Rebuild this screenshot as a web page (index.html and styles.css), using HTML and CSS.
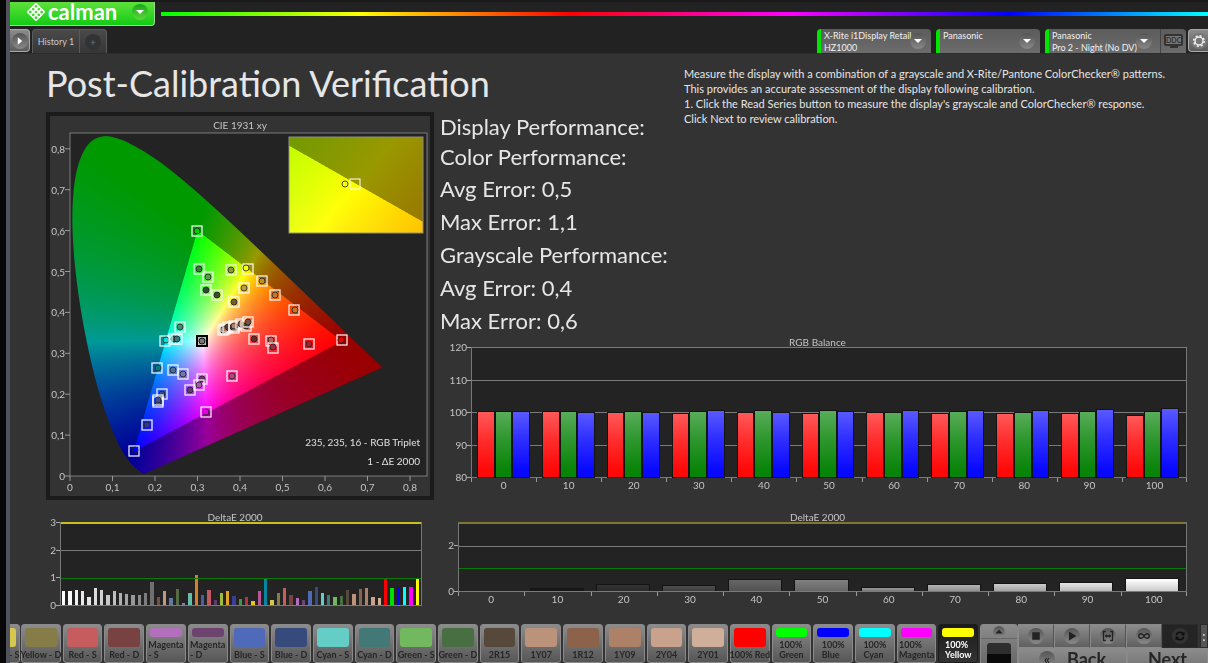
FILE: index.html
```
<!DOCTYPE html>
<html lang="en">
    <head>
        <meta charset="utf-8">
        <title>Calman</title>
        <link rel="stylesheet" href="styles.css">
    </head>
    <body>
        <div class="desktop-edge"></div>

        <div class="app">
            <header class="topbar">
                <button class="brand">
                    <svg class="brand-mark" viewBox="0 0 20 20">
                        <g transform="rotate(45 10 10)" fill="none" stroke="#fff" stroke-width="1.6">
                            <rect x="4" y="4" width="12" height="12" rx="1"/>
                            <path d="M8 4v12M12 4v12M4 8h12M4 12h12"/>
                        </g>
                    </svg>
                    <span class="brand-name">calman</span>
                    <span class="round green"><span class="caret"></span></span>
                </button>
                <div class="rainbow"></div>
            </header>

            <nav class="tabs">
                <button class="icon-tab light" aria-label="Expand">
                    <span class="round"><svg viewBox="0 0 16 16"><path d="M5 3l6 5-6 5z" fill="#fff"/></svg></span>
                </button>
                <div class="history">
                    <button class="history-tab">History 1</button>
                    <button class="add-tab" aria-label="Add"><span class="round dark">+</span></button>
                </div>
                <div class="devices">
                    <button class="device meter">
                        <span class="device-name">X-Rite i1Display Retail<br>HZ1000</span>
                        <span class="round"><span class="caret"></span></span>
                    </button>
                    <button class="device source">
                        <span class="device-name">Panasonic</span>
                        <span class="round"><span class="caret"></span></span>
                    </button>
                    <div class="device display">
                        <button class="device-pick">
                            <span class="device-name">Panasonic<br>Pro 2 - Night (No DV)</span>
                            <span class="round"><span class="caret"></span></span>
                        </button>
                        <button class="ddc"><span class="ddc-screen">DDC</span><span class="ddc-stand"></span></button>
                    </div>
                    <button class="icon-tab light gear" aria-label="Settings">
                        <svg viewBox="0 0 20 20">
                            <circle cx="10" cy="10" r="9" fill="#777"/>
                            <circle cx="10" cy="10" r="4.4" fill="none" stroke="#eee" stroke-width="1.6"/>
                            <circle cx="10" cy="10" r="5.8" fill="none" stroke="#eee" stroke-width="1.8" stroke-dasharray="2.3 2.25"/>
                        </svg>
                    </button>
                </div>
            </nav>

            <main class="content">
                <h1>Post-Calibration Verification</h1>

                <div class="instructions">
                    <p>Measure the display with a combination of a grayscale and X-Rite/Pantone ColorChecker® patterns.</p>
                    <p>This provides an accurate assessment of the display following calibration.</p>
                    <p>1. Click the Read Series button to measure the display's grayscale and ColorChecker® response.</p>
                    <p>Click Next to review calibration.</p>
                </div>

                <section class="cie">
                    <canvas id="gamut" width="760" height="760"></canvas>
                    <svg id="cie-overlay" viewBox="0 0 380 380">
                        <text x="190" y="13" text-anchor="middle">CIE 1931 xy</text>
                        <rect x="20" y="17" width="357" height="343" fill="none" stroke="#7c7c7c"/>
                        <rect x="239" y="21" width="134" height="96" fill="none" stroke="#8f8f80"/>
                        <circle cx="295" cy="68" r="3" fill="none" stroke="#4d4d00"/>
                        <rect x="300" y="63" width="10" height="10" fill="none" stroke="#fff"/>
                        <text class="readout" x="370" y="330" text-anchor="end">235, 235, 16 - RGB Triplet</text>
                        <text class="readout" x="370" y="349" text-anchor="end">1 - ΔE 2000</text>
                    </svg>
                </section>

                <section class="performance">
                    <h2>Display Performance:</h2>
                    <h2>Color Performance:</h2>
                    <p>Avg Error: 0,5</p>
                    <p>Max Error: 1,1</p>
                    <p>Grayscale Performance:</p>
                    <p>Avg Error: 0,4</p>
                    <p>Max Error: 0,6</p>
                </section>

                <figure class="chart rgb-balance" id="rgb-balance">
                    <figcaption>RGB Balance</figcaption>
                    <div class="y-axis"><span>120</span><span>110</span><span>100</span><span>90</span><span>80</span></div>
                    <div class="plot">
                        <div class="lines"><i></i><i></i><i></i><i></i><i></i></div>
                        <div class="bars"></div>
                    </div>
                    <div class="x-axis"></div>
                </figure>

                <figure class="chart delta-colors" id="delta-colors">
                    <figcaption>DeltaE 2000</figcaption>
                    <div class="y-axis"><span>3</span><span>2</span><span>1</span><span>0</span></div>
                    <div class="plot">
                        <div class="bars"></div>
                        <div class="lines"><i class="limit"></i><i></i><i class="good"></i><i></i></div>
                    </div>
                </figure>

                <figure class="chart delta-gray" id="delta-gray">
                    <figcaption>DeltaE 2000</figcaption>
                    <div class="y-axis"><span class="blank"></span><span>2</span><span class="blank"></span><span>0</span></div>
                    <div class="plot">
                        <div class="bars"></div>
                        <div class="lines"><i class="limit"></i><i></i><i class="good"></i><i></i></div>
                    </div>
                    <div class="x-axis"></div>
                </figure>
            </main>

            <footer class="bottombar">
                <div class="cut">
                    <button class="patch"><span class="chip yellow-s"></span><span>Yellow - S</span></button>
                </div>
                <div class="patches" id="patches"></div>
                <div class="level">
                    <button aria-label="Up"><span class="round"><svg viewBox="0 0 16 16"><path d="M3 10l5-5 5 5z" fill="#222"/></svg></span></button>
                    <div class="level-slot"></div>
                </div>
                <div class="transport">
                    <div class="transport-row">
                        <button aria-label="Stop"><span class="round"><svg viewBox="0 0 16 16"><path d="M3 3h10v10H3z" fill="#222"/></svg></span></button>
                        <button aria-label="Play"><span class="round"><svg viewBox="0 0 16 16"><path d="M4 2l10 6-10 6z" fill="#222"/></svg></span></button>
                        <button aria-label="Read series"><span class="round"><svg viewBox="0 0 16 16"><path d="M5 2H2v12h3M11 2h3v12h-3M4 8h8M6 6v4M10 6v4" fill="none" stroke="#222" stroke-width="1.8"/></svg></span></button>
                        <button aria-label="Continuous"><span class="round"><svg viewBox="0 0 16 16"><path d="M8 8C6 4 1 4 1 8s5 4 7 0 7-4 7 0-5 4-7 0z" fill="none" stroke="#222" stroke-width="1.8"/></svg></span></button>
                        <button class="pressed" aria-label="Refresh"><span class="round dark"><svg viewBox="0 0 16 16"><path d="M3 7a5 5 0 0 1 9-2M13 9a5 5 0 0 1-9 2" fill="none" stroke="#0c0c0c" stroke-width="2"/><path d="M14 2v5H9zM2 14V9h5z" fill="#0c0c0c"/></svg></span></button>
                        <button class="pressed more">:</button>
                    </div>
                    <div class="nav-row">
                        <button class="back"><span class="round">«</span>Back</button>
                        <button class="next">Next</button>
                    </div>
                </div>
            </footer>
        </div>

        <script>

            const levels = [0, 10, 20, 30, 40, 50, 60, 70, 80, 90, 100];

            const balance = [
                [100, 100, 100],
                [100, 100, 99.7],
                [99.7, 100, 99.7],
                [99.4, 100, 100.3],
                [99.7, 100.3, 99.7],
                [99.4, 100.3, 100],
                [99.7, 99.7, 100.3],
                [99.4, 100, 100.3],
                [99.4, 99.7, 100.3],
                [99.4, 100, 100.6],
                [98.8, 100, 100.9]
            ];

            const grayDelta = [0, 0.07, 0.27, 0.22, 0.5, 0.46, 0.12, 0.25, 0.3, 0.33, 0.52];

            const colorDelta = [
                [0.5, '#fff'], [0.5, '#fafafa'], [0.55, '#f2f2f2'], [0.5, '#eaeaea'], [0.3, '#e4e4e4'],
                [0.62, '#dcdcdc'], [0.55, '#d2d2d2'], [0.35, '#c8c8c8'], [0.52, '#bebebe'], [0.45, '#b0b0b0'],
                [0.4, '#a4a4a4'], [0.36, '#989898'], [0.36, '#8a8a8a'], [0.45, '#7c7c7c'], [0.82, '#707070'],
                [0.3, '#735244'], [0.5, '#c29682'], [0.25, '#627a9d'], [0.58, '#576c43'], [0.08, '#8580b1'],
                [0.43, '#67bdaa'], [1.08, '#d67e2c'], [0.35, '#505ba6'], [0.55, '#c15a63'], [0.18, '#5e3c6c'],
                [0.43, '#9dbc40'], [0.52, '#e0a32e'], [0.32, '#383d96'], [0.23, '#469449'], [0.28, '#af363c'],
                [0.14, '#e7c71f'], [0.5, '#bb5695'], [0.93, '#0885a1'], [0.17, '#d6c84f'], [0.43, '#867c48'],
                [0.6, '#c75c5f'], [0.38, '#774241'], [0.25, '#b26fbc'], [0.17, '#6c446f'], [0.52, '#4f6ab8'],
                [0.65, '#374a7c'], [0.42, '#64cdc6'], [0.37, '#427876'], [0.3, '#72b85e'], [0.31, '#476f42'],
                [0.55, '#57483c'], [0.4, '#bb937b'], [0.58, '#8c624a'], [0.62, '#ad8167'], [0.3, '#c8a28c'],
                [0.25, '#cfae9a'], [0.93, '#f00'], [0.62, '#0d0'], [0.65, '#00f'], [0.65, '#0ff'],
                [0.65, '#f0f'], [0.93, '#ff0']
            ];

            const patches = [
                ['Yellow - D', '#867c48'], ['Red - S', '#c75c5f'], ['Red - D', '#774241'],
                ['Magenta<br>- S', '#b26fbc', 'left'], ['Magenta<br>- D', '#6c446f', 'left'],
                ['Blue - S', '#4f6ab8'], ['Blue - D', '#374a7c'], ['Cyan - S', '#64cdc6'], ['Cyan - D', '#427876'],
                ['Green - S', '#72b85e'], ['Green - D', '#476f42'], ['2R15', '#57483c'], ['1Y07', '#bb937b'],
                ['1R12', '#8c624a'], ['1Y09', '#ad8167'], ['2Y04', '#c8a28c'], ['2Y01', '#cfae9a'],
                ['100% Red', '#ff0000'], ['100%<br>Green', '#00ff00', 'left'], ['100%<br>Blue', '#0000ff', 'left'],
                ['100%<br>Cyan', '#00ffff', 'left'], ['100%<br>Magenta', '#ff00ff', 'left'],
                ['100%<br>Yellow', '#ffff00', 'left selected']
            ];

            // target x, y, measured colour, measured offset
            const markers = [
                [147, 115, '#00d000'], [149, 153, '#3a7a45'], [158, 161, '#5f9950'], [156, 174, '#2d4a35'],
                [167, 179, '#3c4c28'], [181, 154, '#8a9a30'], [198, 153, '#ffff00', -2, -1], [212, 165, '#b89030'],
                [194, 172, '#b8a040'], [184, 186, '#6a5f35'], [225, 179, '#c07830'], [130, 211, '#4a8a70'],
                [115, 225, '#00e0e0', 1, -1], [124, 223, '#207070'], [127, 223, '#387878'],
                [173, 214, '#c29682'], [175, 213, '#a87c68'], [178, 211, '#573c30'], [184, 212, '#8c624a'],
                [184, 210, '#ad8167'], [191, 208, '#8c624a'], [196, 210, '#573c30'], [198, 206, '#735244'],
                [204, 223, '#6a2a2a'], [221, 225, '#c15a63', 0, -1], [223, 232, '#a03040', 0, -1],
                [107, 252, '#087a85', 1, 0], [123, 254, '#50709a'], [133, 258, '#7078a8'], [112, 278, '#374a7c'],
                [108, 286, '#4f6ab8'], [108, 284, '#404f90'], [140, 274, '#5e3c6c'], [152, 263, '#6c3468'],
                [149, 269, '#a060a8'], [97, 309, '#303890'], [84, 335, '#0000ff', 1, -1], [156, 296, '#e000e0'],
                [182, 260, '#b04888'], [244, 194, '#c87820', 1, 0], [259, 228, '#a82030'], [292, 224, '#f00000', -1, 0]
            ];

            const locus = [
                [0.1741, 0.005], [0.1714, 0.0051], [0.1644, 0.0109], [0.1566, 0.0177], [0.144, 0.0297],
                [0.1241, 0.0578], [0.1096, 0.0868], [0.0913, 0.1327], [0.0687, 0.2007], [0.0454, 0.295],
                [0.0235, 0.4127], [0.0082, 0.5384], [0.0039, 0.6548], [0.0139, 0.7502], [0.0389, 0.812],
                [0.0743, 0.8338], [0.1142, 0.8262], [0.1547, 0.8059], [0.1929, 0.7816], [0.2296, 0.7543],
                [0.3016, 0.6923], [0.3731, 0.6245], [0.4441, 0.5547], [0.5125, 0.4866], [0.5752, 0.4242],
                [0.627, 0.3725], [0.6658, 0.334], [0.6915, 0.3083], [0.719, 0.2809], [0.7347, 0.2653]
            ];

            // plot origin and size of 0.1 in the 380 x 380 drawing
            const originX = 20;
            const originY = 360;
            const stepX = 42.5;
            const stepY = 40.9;

            function colorAt(x, y) {
                const X = x / y;
                const Z = (1 - x - y) / y;
                const rgb = [
                    3.2406 * X - 1.5372 - 0.4986 * Z,
                    -0.9689 * X + 1.8758 + 0.0415 * Z,
                    0.0557 * X - 0.204 + 1.057 * Z
                ];
                const inside = Math.min(...rgb) >= 0;
                const scale = (inside ? 255 : 153) / Math.max(...rgb);
                return rgb.map(c => Math.max(0, c * scale));
            }

            function shade(width, height, x0, x1, y0, y1) {
                const buffer = document.createElement('canvas');
                buffer.width = width;
                buffer.height = height;
                const context = buffer.getContext('2d');
                const image = context.createImageData(width, height);
                for (let row = 0; row < height; row++) {
                    for (let col = 0; col < width; col++) {
                        const x = x0 + (x1 - x0) * (col + 0.5) / width;
                        const y = y1 - (y1 - y0) * (row + 0.5) / height;
                        const i = (row * width + col) * 4;
                        const rgb = colorAt(x, y);
                        image.data[i] = rgb[0];
                        image.data[i + 1] = rgb[1];
                        image.data[i + 2] = rgb[2];
                        image.data[i + 3] = 255;
                    }
                }
                context.putImageData(image, 0, 0);
                return buffer;
            }

            function drawGamut() {
                const context = document.querySelector('#gamut').getContext('2d');
                context.scale(2, 2);
                context.fillStyle = '#232323';
                context.fillRect(20, 17, 357, 343);

                const points = locus.map(p => [originX + p[0] * 10 * stepX, originY - p[1] * 10 * stepY]);
                context.save();
                context.beginPath();
                context.moveTo(points[0][0], points[0][1]);
                for (let i = 1; i < points.length - 1; i++) {
                    const next = points[i + 1];
                    context.quadraticCurveTo(points[i][0], points[i][1], (points[i][0] + next[0]) / 2, (points[i][1] + next[1]) / 2);
                }
                const last = points[points.length - 1];
                context.lineTo(last[0], last[1]);
                context.closePath();
                context.clip();
                context.drawImage(shade(714, 686, 0, 35.7 / stepX, 0, 34.3 / stepY), 20, 17, 357, 343);
                context.restore();

                context.drawImage(shade(268, 192, 0.399, 0.439, 0.485, 0.525), 239, 21, 134, 96);
            }

            function drawOverlay() {
                let svg = '';
                for (let i = 0; i <= 8; i++) {
                    const x = originX + i * stepX;
                    const y = originY - i * stepY;
                    const label = i === 0 ? '0' : '0,' + i;
                    svg += `<path d="M${x} 360v5M20 ${y}h-5" stroke="#999"/>`;
                    svg += `<text x="${x}" y="375" text-anchor="middle">${label}</text>`;
                    svg += `<text x="15" y="${y + 4}" text-anchor="end">${label}</text>`;
                }
                for (const [x, y, color, dx = 0, dy = 0] of markers) {
                    svg += `<rect x="${x - 5}" y="${y - 5}" width="10" height="10" fill="none" stroke="#fff" stroke-opacity="0.9" stroke-width="1.3"/>`;
                    svg += `<circle cx="${x + dx}" cy="${y + dy}" r="3" fill="${color}" stroke="#222" stroke-opacity="0.8"/>`;
                }
                svg += '<rect x="147" y="220" width="10" height="10" fill="#bbb" stroke="#000" stroke-width="2"/>';
                svg += '<circle cx="152" cy="225" r="3" fill="#777" stroke="#111"/>';
                document.querySelector('#cie-overlay').innerHTML += svg;
            }

            function drawCharts() {
                const bar = (height, color) => `<b class="bar" style="height: ${height}%; background-color: ${color}"></b>`;

                document.querySelector('#rgb-balance .bars').innerHTML = balance.map(values =>
                    '<div class="group">' + values.map((v, i) =>
                        bar((v - 80) / 40 * 100, ['#ff0808', '#088408', '#0808ff'][i])).join('') + '</div>').join('');

                document.querySelector('#delta-colors .bars').innerHTML = colorDelta.map(([v, color]) =>
                    '<div class="group">' + bar(v / 3 * 100, color) + '</div>').join('');

                document.querySelector('#delta-gray .bars').innerHTML = grayDelta.map((v, i) => {
                    const gray = Math.round(i * 25.5);
                    return '<div class="group">' + (v ? bar(v / 3 * 100, `rgb(${gray}, ${gray}, ${gray})`) : '') + '</div>';
                }).join('');

                document.querySelectorAll('.x-axis').forEach(axis => {
                    axis.innerHTML = levels.map(level => `<span>${level}</span>`).join('');
                });
            }

            function drawPatches() {
                document.querySelector('#patches').innerHTML = patches.map(([name, color, type = '']) =>
                    `<button class="patch ${type}"><span class="chip" style="background-color: ${color}"></span><span>${name}</span></button>`).join('');
            }

            drawGamut();
            drawOverlay();
            drawCharts();
            drawPatches();

        </script>
    </body>
</html>
```
FILE: styles.css
```
* {
    box-sizing: border-box;
}
body {
    margin: 0;
    display: flex;
    height: 100vh;
    overflow: hidden;
    background-color: #333333;
    color: #e6e6e6;
    font-family: Lato, "Open Sans", sans-serif;
}
button {
    margin: 0;
    padding: 0;
    border: none;
    background: none;
    color: inherit;
    font-family: inherit;
    cursor: pointer;
}
p, h1, h2, figure {
    margin: 0;
    font-weight: normal;
}
.desktop-edge {
    flex: none;
    width: 10px;
    background-color: #070707;
    border-right: 4px solid #50535c;
}
.app {
    flex: 1;
    min-width: 0;
}

/* top bar */
.topbar {
    display: flex;
    align-items: center;
    gap: 6px;
    height: 28px;
    padding-bottom: 2px;
    background-color: #222222;
    border-top: 2px solid #191919;
}
.brand {
    display: flex;
    align-items: center;
    width: 145px;
    height: 24px;
    padding: 0 6px 3px 16px;
    background: linear-gradient(#5fe03c, #12cc14);
    border: 1px solid #9ad890;
    border-width: 0 1px 1px 0;
    border-radius: 0 0 4px 0;
    color: white;
}
.brand-mark {
    width: 20px;
    height: 20px;
}
.brand-name {
    flex: 1;
    padding-left: 2px;
    text-align: left;
    font-size: 22px;
    font-weight: bold;
    line-height: 18px;
}
.rainbow {
    flex: 1;
    height: 4px;
    background: linear-gradient(to right, #00ff00, #ffff00 19%, #ff0000 39%, #ff00ff 60%, #0000ff 81%, #00ffff);
}
.round {
    display: flex;
    flex: none;
    align-items: center;
    justify-content: center;
    width: 16px;
    height: 16px;
    border-radius: 50%;
    background: linear-gradient(#555555, #888888);
}
.round svg {
    width: 12px;
    height: 12px;
}
.round.green {
    background: linear-gradient(#18a818, #5ed83c);
}
.round.dark {
    background: #333333;
}
.caret {
    border: 4px solid transparent;
    border-top-color: white;
    border-bottom: none;
}

/* tabs */
.tabs {
    display: flex;
    gap: 2px;
    height: 26px;
    padding-top: 1px;
    background-color: #222222;
    border-bottom: 1px solid #2c2c2c;
}
.icon-tab {
    display: flex;
    align-items: center;
    justify-content: center;
    width: 20px;
    height: 23px;
    border: 1px solid #aaaaaa;
    border-left: none;
    border-radius: 0 4px 4px 0;
    background: linear-gradient(#8c8c8c, #5c5c5c);
}
.history {
    display: flex;
    border: 1px solid #5a5a5a;
    border-bottom: none;
    border-radius: 4px 4px 0 0;
    background: linear-gradient(#4a4a4a, #363636);
    color: #c8c8c8;
}
.history-tab {
    width: 47px;
    border-right: 1px solid #5a5a5a;
    font-size: 9px;
}
.add-tab {
    display: flex;
    align-items: center;
    justify-content: center;
    width: 26px;
    color: #777777;
    font-size: 10px;
}
.devices {
    display: flex;
    gap: 5px;
    margin-left: auto;
}
.device {
    display: flex;
    border-left: 4px solid #00e400;
    border-radius: 4px 4px 0 0;
    background: linear-gradient(#5c5c5c, #6c6c6c);
}
.meter {
    width: 114px;
}
.source {
    width: 104px;
}
.display {
    width: 141px;
}
.device-pick {
    display: flex;
    flex: 1;
    min-width: 0;
}
.device-name {
    flex: 1;
    min-width: 0;
    padding: 1px 0 0 3px;
    text-align: left;
    white-space: nowrap;
    font-size: 9px;
    line-height: 12px;
    color: #f0f0f0;
}
.device .round {
    margin: 4px 5px 0 0;
}
.display .round {
    margin-right: 8px;
}
.ddc {
    width: 26px;
    padding: 0 3px;
    border-left: 1px solid #444444;
}
.ddc-screen {
    display: block;
    border: 2px solid #333333;
    border-radius: 2px;
    background-color: #777777;
    color: #333333;
    font-size: 7px;
    font-weight: bold;
    line-height: 8px;
}
.ddc-stand {
    display: block;
    width: 8px;
    height: 2px;
    margin: 0 auto;
    background-color: #333333;
}
.gear {
    margin-left: -3px;
    border: 1px solid #aaaaaa;
    border-right: none;
    border-radius: 4px 0 0 4px;
}
.gear svg {
    flex: none;
    width: 18px;
    height: 18px;
}

/* main area */
.content {
    display: grid;
    grid-template-columns: 388px 239px 1fr;
    grid-template-rows: 58px auto 1fr auto;
    column-gap: 5px;
    padding: 0 13px 17px 36px;
}
h1 {
    grid-column: 1 / 3;
    font-size: 36px;
    line-height: 58px;
    white-space: nowrap;
}
.instructions {
    grid-column: 3;
    grid-row: 1 / 3;
    padding: 12px 0 0 1px;
    font-size: 11px;
    line-height: 15px;
    white-space: nowrap;
    color: #e6e6e6;
}
.cie {
    display: grid;
    grid-column: 1;
    grid-row: 2 / 4;
    border: 4px solid #1b1b1b;
}
.cie canvas,
.cie svg {
    grid-area: 1 / 1;
    width: 100%;
}
.cie text {
    fill: #c4c4c4;
    font-size: 10px;
}
.cie .readout {
    fill: #e0e0e0;
}
.performance {
    grid-column: 2;
    grid-row: 2;
    padding-left: 1px;
    white-space: nowrap;
    font-size: 22px;
    line-height: 33px;
}
.performance h2 {
    font-size: 22px;
    line-height: 30px;
}

/* bar charts */
.chart {
    display: grid;
    align-content: start;
    color: #c4c4c4;
    font-size: 10px;
}
.chart figcaption {
    grid-column: 1 / 3;
    padding-left: 9px;
    text-align: center;
    line-height: 10px;
}
.rgb-balance {
    grid-column: 2 / 4;
    grid-row: 3;
    grid-template-columns: 32px 1fr;
    padding-right: 8px;
}
.rgb-balance .plot {
    height: 131px;
}
.delta-colors {
    grid-column: 1;
    grid-template-columns: 14px 1fr;
    padding: 12px 12px 0 0;
}
.delta-colors figcaption {
    padding-left: 2px;
}
.delta-colors .plot {
    height: 84px;
}
.delta-gray {
    grid-column: 2 / 4;
    grid-template-columns: 19px 1fr;
    padding: 12px 8px 0 0;
}
.delta-gray .plot {
    height: 70px;
}
.y-axis {
    display: flex;
    flex-direction: column;
    justify-content: space-between;
}
.y-axis span {
    display: flex;
    align-items: center;
    justify-content: flex-end;
    height: 1px;
    line-height: 1px;
}
.y-axis span::after {
    content: "";
    width: 4px;
    height: 1px;
    background-color: #aaaaaa;
}
.y-axis .blank::after {
    display: none;
}
.plot {
    display: grid;
    background-color: #232323;
    border: 1px solid #777777;
    border-width: 0 1px;
}
.lines,
.bars {
    grid-area: 1 / 1;
    min-height: 0;
}
.lines {
    display: flex;
    flex-direction: column;
    justify-content: space-between;
}
.lines i {
    height: 1px;
    background-color: #7a7a7a;
}
.lines i.limit {
    height: 2px;
    background-color: #c8c020;
}
.lines i.good {
    background-color: #0c780c;
}
.delta-gray .lines i.limit {
    background-color: #7c7830;
}
.bars {
    display: flex;
    padding-bottom: 1px;
}
.group {
    display: flex;
    flex: 1;
    align-items: flex-end;
    gap: 2px;
    padding: 0 8px 0 6px;
}
.bar {
    flex: 1;
    background-image: linear-gradient(rgba(255, 255, 255, 0.33), rgba(255, 255, 255, 0.16) 40%, transparent 90%);
    box-shadow: 0 0 0 1px #141414;
}
.delta-colors .group {
    padding: 0 2px 0 1px;
}
.delta-colors .bar {
    background-image: none;
    box-shadow: none;
}
.delta-gray .bar {
    background-image: linear-gradient(transparent, rgba(0, 0, 0, 0.2));
}
.x-axis {
    display: flex;
    grid-column: 2;
}
.x-axis span {
    flex: 1;
    text-align: center;
    line-height: 15px;
    background: linear-gradient(#999999, #999999) no-repeat 0 0 / 1px 4px;
}
.x-axis span:last-child {
    background: linear-gradient(#999999, #999999) no-repeat 0 0 / 1px 4px,
        linear-gradient(#999999, #999999) no-repeat 100% 0 / 1px 4px;
}

/* bottom bar */
.bottombar {
    display: flex;
    align-items: flex-start;
}
.cut {
    display: flex;
    flex: none;
    justify-content: flex-end;
    width: 11px;
    padding-right: 1px;
    overflow: hidden;
}
.cut .patch {
    flex: none;
    width: 40px;
}
.patches {
    display: flex;
    flex: 1;
    gap: 2px;
    min-width: 0;
}
.patch {
    display: flex;
    flex: 1 1 0;
    flex-direction: column;
    align-items: center;
    gap: 3px;
    min-width: 0;
    height: 39px;
    padding: 3px 3px 2px;
    border: 1px solid #8a8a8a;
    border-radius: 3px;
    background: linear-gradient(#8c8c8c, #565656);
    color: #262626;
    font-size: 9px;
    font-weight: bold;
    line-height: 10px;
    white-space: nowrap;
}
.patch.left {
    text-align: left;
}
.patch.selected {
    border-color: #1c1c1c;
    background: linear-gradient(#1a1a1a, #333333);
    color: white;
}
.chip {
    flex: 1;
    align-self: stretch;
    border-radius: 3px;
}
.chip.yellow-s {
    background-color: #d6c84f;
}
.level {
    flex: none;
    width: 38px;
    height: 60px;
    margin-left: 2px;
    border: 1px solid #8a8a8a;
    border-radius: 3px 3px 0 0;
    background: linear-gradient(#8c8c8c, #565656);
}
.level button {
    display: flex;
    align-items: center;
    justify-content: center;
    width: 100%;
    height: 14px;
    border-bottom: 1px solid #666666;
}
.level .round {
    width: 12px;
    height: 12px;
}
.level-slot {
    height: 40px;
    margin: 4px 6px;
    border-radius: 3px;
    background: linear-gradient(#2e2e2e 28%, #0a0a0a 28%);
}
.transport {
    flex: none;
    width: 190px;
}
.transport-row,
.nav-row {
    display: flex;
}
.transport-row button {
    display: flex;
    flex: none;
    align-items: center;
    justify-content: center;
    width: 36px;
    height: 24px;
    border: 1px solid #8a8a8a;
    border-right-color: #555555;
    background: linear-gradient(#8c8c8c, #606060);
}
.transport-row .pressed {
    border-color: #2a2a2a;
    background: #242424;
}
.transport-row .more {
    margin-left: 2px;
    width: 8px;
    background: #555555;
}
.nav-row button {
    display: flex;
    align-items: center;
    justify-content: center;
    gap: 12px;
    flex: 1;
    height: 36px;
    padding-bottom: 14px;
    border: 1px solid #8a8a8a;
    background: linear-gradient(#8c8c8c, #606060);
    color: #262626;
    font-size: 18px;
    font-weight: bold;
    line-height: 20px;
}
.nav-row .back {
    flex: none;
    width: 109px;
}
.nav-row .round {
    font-size: 14px;
    line-height: 12px;
}
```
